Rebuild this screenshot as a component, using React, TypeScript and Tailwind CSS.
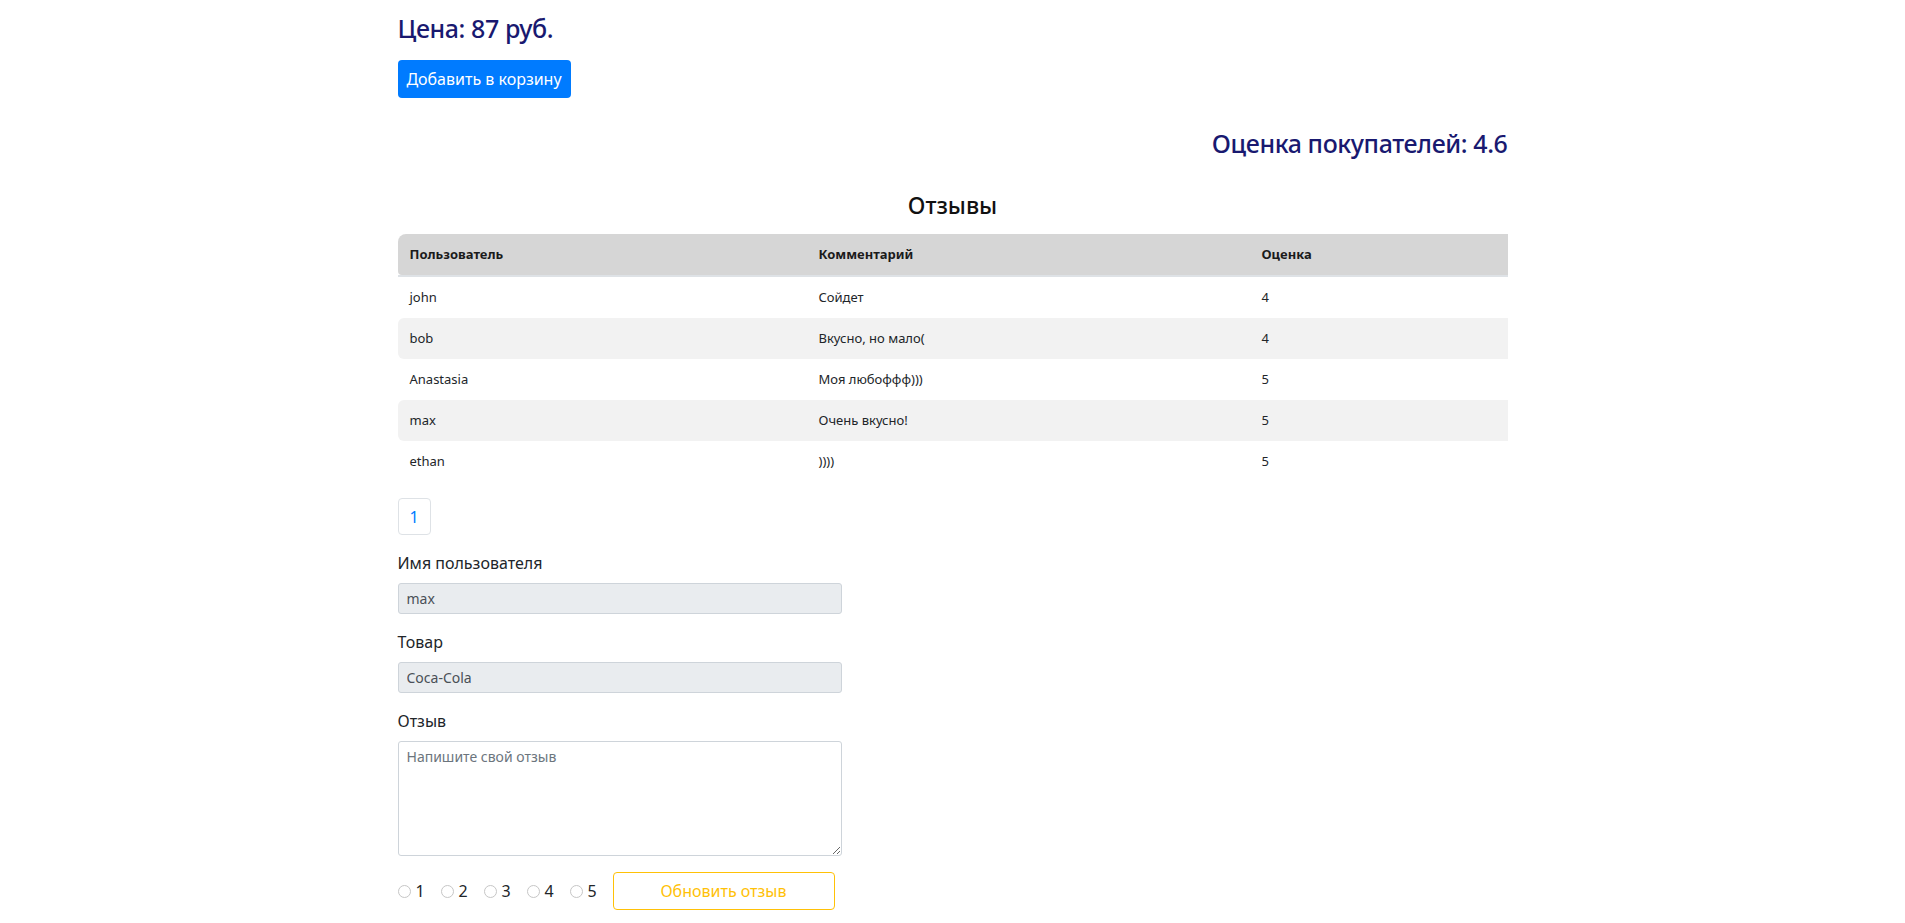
export default function App() {
  const rows: [string, string, string][] = [
    ["john", "Сойдет", "4"],
    ["bob", "Вкусно, но мало(", "4"],
    ["Anastasia", "Моя любоффф)))", "5"],
    ["max", "Очень вкусно!", "5"],
    ["ethan", "))))", "5"],
  ];
  return (
    <div className="min-h-screen bg-white font-['Noto_Sans',sans-serif] text-[#212529]">
      <div className="w-[1110px] mx-auto flex flex-col pb-[12px]">
        <h3 className="mt-[11px] h-[34px] leading-[34px] text-[25px] font-medium tracking-[-0.4px] text-[#191970]">Цена: 87 руб.</h3>
        <div className="mt-[15px]">
          <button className="h-[38px] w-[173px] rounded-[4px] bg-[#007bff] text-white text-[16px] leading-[24px]">
            Добавить в корзину
          </button>
        </div>
        <h3 className="mt-[28px] h-[34px] leading-[34px] text-[25px] font-medium tracking-[-0.4px] text-[#191970] text-right">Оценка покупателей: 4.6</h3>
        <h4 className="mt-[32px] h-[26px] leading-[26px] text-[23px] font-medium text-center text-[#111]">Отзывы</h4>
        <div className="mt-[16px] flex flex-col text-[13px]">
          <div className="grid grid-cols-[409px_443px_258px] h-[41px] items-center bg-[#d6d6d6] rounded-tl-[8px] rounded-bl-[4px] font-bold text-[#1b1b1b]">
            <div className="pl-[12px]">Пользователь</div>
            <div className="pl-[12px]">Комментарий</div>
            <div className="pl-[12px]">Оценка</div>
          </div>
          <div className="h-[2px] bg-[#dee2e6]" />
          {rows.map((r, i) => (
            <div
              key={i}
              className={
                "grid grid-cols-[409px_443px_258px] h-[41px] items-center rounded-l-[6px] " +
                (i % 2 === 1 ? "bg-[#f2f2f2]" : "bg-white")
              }
            >
              <div className="pl-[12px]">{r[0]}</div>
              <div className="pl-[12px]">{r[1]}</div>
              <div className="pl-[12px]">{r[2]}</div>
            </div>
          ))}
        </div>
        <div className="mt-[16px] flex">
          <div className="w-[33px] h-[37px] border border-[#dee2e6] rounded-[4px] flex items-center justify-center text-[16px] text-[#007bff]">
            1
          </div>
        </div>
        <div className="mt-[16px] flex flex-col w-[444px]">
          <label className="h-[24px] leading-[24px] text-[16px]">Имя пользователя</label>
          <input
            disabled
            value="max"
            readOnly
            className="mt-[8px] h-[31px] w-full px-[8px] text-[14px] text-[#495057] bg-[#e9ecef] border border-[#ced4da] rounded-[3px]"
          />
          <label className="mt-[16px] h-[24px] leading-[24px] text-[16px]">Товар</label>
          <input
            disabled
            value="Coca-Cola"
            readOnly
            className="mt-[8px] h-[31px] w-full px-[8px] text-[14px] text-[#495057] bg-[#e9ecef] border border-[#ced4da] rounded-[3px]"
          />
          <label className="mt-[16px] h-[24px] leading-[24px] text-[16px]">Отзыв</label>
          <textarea
            placeholder="Напишите свой отзыв"
            className="mt-[8px] h-[115px] w-full px-[8px] py-[4px] text-[14px] leading-[21px] text-[#495057] placeholder:text-[#6c757d] bg-white border border-[#ced4da] rounded-[3px] outline-none"
          />
        </div>
        <div className="mt-[16px] flex items-center h-[38px]">
          {["1", "2", "3", "4", "5"].map((n) => (
            <div key={n} className="w-[43px] flex items-center">
              <span className="w-[13px] h-[13px] rounded-full border border-[#c6c6c6] bg-white shrink-0" />
              <span className="ml-[5px] text-[16px] leading-[24px]">{n}</span>
            </div>
          ))}
          <button className="w-[222px] h-[38px] border border-[#ffc107] rounded-[4px] text-[#ffc107] text-[16px] bg-white">
            Обновить отзыв
          </button>
        </div>
      </div>
    </div>
  );
}
